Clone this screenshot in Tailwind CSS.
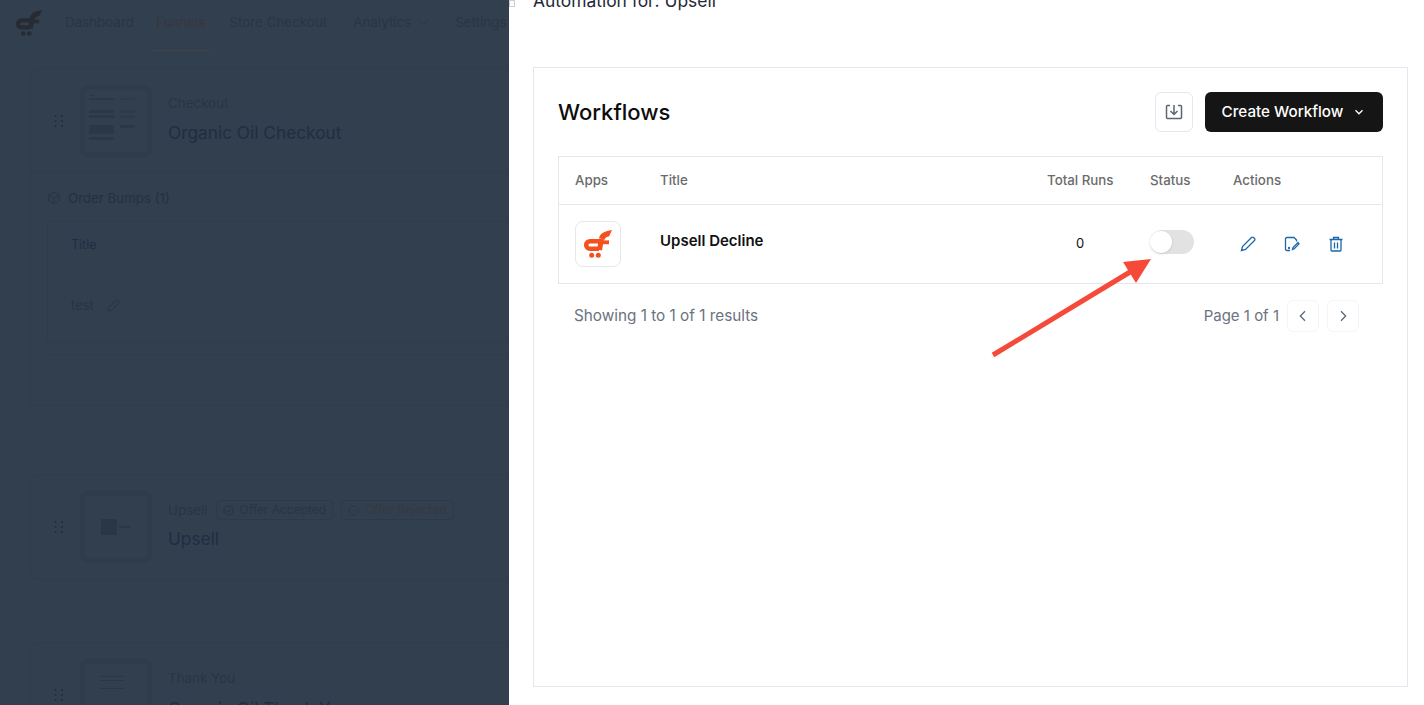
<!DOCTYPE html>
<html><head><meta charset="utf-8"><title>Workflows</title>
<script src="https://cdn.jsdelivr.net/npm/@tailwindcss/browser@4"></script></head>
<body class="m-0">
<div class="relative flex h-[705px] w-[1424px] overflow-hidden bg-white font-['Inter','Liberation_Sans',sans-serif]">
  <!-- dimmed page -->
  <div class="h-full w-[509px] shrink-0 overflow-hidden bg-[#323f4e]">
    <div class="w-[560px]">
      <nav class="flex h-[51px] items-start pl-[16px] text-[13.400px] leading-5 text-[#2a3545]">
        <svg class="mt-[10px] h-[26px] w-[26px]" viewBox="0 0 28 28" fill="none" stroke="#262b34" stroke-width="4.500"><path d="M15 11.200H6a3.800 3.800 0 0 0 0 7.600h9"/><path d="M15.500 20 17.500 9" stroke-width="5"/><path d="M15 8C16.500 3 21 1 28 0L25 6.500C22.500 6.800 21 7.800 20.500 10z" fill="#262b34" stroke="none"/><path d="M14 12.300h11" stroke-width="3.800"/><circle cx="7.700" cy="25.300" r="2.500" fill="#262b34" stroke="none"/><circle cx="14.300" cy="25.300" r="2.500" fill="#262b34" stroke="none"/></svg>
        <a class="ml-[23px] mt-[12px]">Dashboard</a>
        <a class="relative ml-[22px] mt-[12px] h-[39px] text-[#38363f]">Funnels<span class="absolute -left-[4px] -right-[4px] bottom-0 h-px bg-[#44434a]"></span></a>
        <a class="ml-[24px] mt-[12px]">Store Checkout</a>
        <a class="ml-[26px] mt-[12px] flex items-center gap-[6px]">Analytics
          <svg class="h-3 w-3" viewBox="0 0 12 12" fill="none" stroke="currentColor"><path d="m1.500 4 4.500 4.500L10.500 4"/></svg></a>
        <a class="ml-[26px] mt-[12px]">Settings</a>
      </nav>
      <div class="ml-[30px] mt-[17px] h-[338px] w-[490px] rounded-t-lg border border-[#303c4b]">
        <div class="flex h-[104px] items-center border-b border-[#303c4b]">
          <svg class="ml-[23px] h-[14px] w-[10px]" viewBox="0 0 10 14" fill="#252d3b"><circle cx="1.500" cy="2" r="1"/><circle cx="8" cy="2" r="1"/><circle cx="1.500" cy="7" r="1"/><circle cx="8" cy="7" r="1"/><circle cx="1.500" cy="12" r="1"/><circle cx="8" cy="12" r="1"/></svg>
          <div class="ml-[16px] grid h-[72px] w-[72px] shrink-0 grid-cols-[25px_15px] content-start gap-x-[6px] gap-y-[2px] rounded-lg border-[5px] border-[#2f3c4b] px-[4px] pt-[5px]">
            <span class="col-span-2 h-[1px] w-[5px] bg-[#2d3846]"></span>
            <span class="h-[2px] bg-[#2d3846]"></span><span class="h-[2px] bg-[#303b4a]"></span>
            <span class="mt-[8px] h-[3px] bg-[#2d3846]"></span><span class="mt-[8px] h-[3px] bg-[#303b4a]"></span>
            <span class="h-[3px] bg-[#2d3846]"></span><span class="h-[3px] bg-[#303b4a]"></span>
            <span class="mt-[5px] h-[9px] bg-[#2d3846]"></span><span class="mt-[5px] h-[3px] bg-[#2d3846]"></span>
            <span class="mt-[1px] h-[3px] bg-[#2d3846]"></span>
          </div>
          <div class="ml-[16px] -mt-[2px]">
            <p class="text-[13.400px] leading-4 text-[#2a3545]">Checkout</p>
            <p class="mt-[10px] text-[17.300px] leading-6 text-[#232c45]">Organic Oil Checkout</p>
          </div>
        </div>
        <div class="flex items-center gap-[7px] pl-[16px] pt-[17px] text-[13.300px] leading-4 text-[#263041]">
          <svg class="h-[14px] w-[14px]" viewBox="0 0 24 24" fill="none" stroke="#283241" stroke-width="1.500"><path d="M12 2 21 7v10l-9 5-9-5V7z"/><path d="m3 7 9 5 9-5M12 12v10"/></svg>
          Order Bumps (1)
        </div>
        <div class="ml-[16px] mt-[15px] h-[122px] w-[470px] border border-[#303c4b] pl-[23px] pt-[15px] text-[12.500px] leading-4 text-[#232c45]">
          <p>Title</p>
          <p class="mt-[44px] flex items-center gap-[12px] text-[13px] text-[#293444]">test
            <svg class="h-[15px] w-[15px]" viewBox="0 0 24 24" fill="none" stroke="#283241" stroke-width="1.500"><path d="M3 21l1.500-6L17 2.500l4.500 4.500L9 19.500z"/></svg></p>
        </div>
        <div class="ml-[16px] mt-[11px] h-[50px] w-[470px] border-t border-[#303c4b]"></div>
      </div>
      <div class="ml-[30px] mt-[68px] flex h-[106px] w-[490px] items-center rounded-lg border border-[#303c4b]">
        <svg class="ml-[23px] h-[14px] w-[10px]" viewBox="0 0 10 14" fill="#252d3b"><circle cx="1.500" cy="2" r="1"/><circle cx="8" cy="2" r="1"/><circle cx="1.500" cy="7" r="1"/><circle cx="8" cy="7" r="1"/><circle cx="1.500" cy="12" r="1"/><circle cx="8" cy="12" r="1"/></svg>
        <div class="ml-[16px] flex h-[72px] w-[72px] shrink-0 items-center justify-center gap-[2px] rounded-lg border-[5px] border-[#2f3c4b]">
          <span class="h-4 w-4 bg-[#2c3746]"></span><span class="h-[2px] w-3 bg-[#2d3846]"></span>
        </div>
        <div class="ml-[16px] -mt-[3px]">
          <div class="flex items-center gap-[8px] text-[13.400px] leading-4 text-[#2a3545]">Upsell
            <span class="flex h-5 items-center gap-[6px] rounded border border-[#2e3a49] px-[6px] text-[12px]">
              <svg class="h-[11px] w-[11px]" viewBox="0 0 12 12" fill="none" stroke="#283241"><circle cx="6" cy="6" r="5"/><path d="m3.500 6 2 2 3-4"/></svg>Offer Accepted</span>
            <span class="flex h-5 items-center gap-[6px] rounded border border-[#2e3a49] px-[6px] text-[12px] text-[#363741]">
              <svg class="h-[11px] w-[11px]" viewBox="0 0 12 12" fill="none" stroke="#333540"><circle cx="6" cy="6" r="5"/><path d="M4 6h4"/></svg>Offer Rejected</span>
          </div>
          <p class="mt-[7px] text-[17.300px] leading-6 text-[#232c45]">Upsell</p>
        </div>
      </div>
      <div class="ml-[30px] mt-[62px] flex h-[106px] w-[490px] items-center rounded-lg border border-[#303c4b]">
        <svg class="ml-[23px] h-[14px] w-[10px]" viewBox="0 0 10 14" fill="#252d3b"><circle cx="1.500" cy="2" r="1"/><circle cx="8" cy="2" r="1"/><circle cx="1.500" cy="7" r="1"/><circle cx="8" cy="7" r="1"/><circle cx="1.500" cy="12" r="1"/><circle cx="8" cy="12" r="1"/></svg>
        <div class="ml-[16px] flex h-[72px] w-[72px] shrink-0 flex-col gap-[3px] rounded-lg border-[5px] border-[#2f3c4b] px-[14px] pt-[12px]">
          <span class="h-px w-[26px] bg-[#2d3846]"></span><span class="h-px w-[26px] bg-[#2d3846]"></span><span class="mt-1 h-px w-[26px] bg-[#2d3846]"></span>
        </div>
        <div class="ml-[16px]">
          <p class="text-[13.400px] leading-4 text-[#2a3545]">Thank You</p>
          <p class="mt-[11px] text-[17.300px] leading-6 text-[#232c45]">Organic Oil Thank You</p>
        </div>
      </div>
    </div>
  </div>
  <!-- drawer -->
  <div class="relative h-full flex-1 bg-white">
    <span class="absolute left-0 top-0 h-[7px] w-[6px] border border-[#c9ced4] bg-white"></span>
    <p class="-mt-[11px] pl-[24px] text-[17.400px] leading-6 text-[#1f2937]">Automation for: Upsell</p>
    <div class="ml-[24px] mt-[54px] h-[620px] w-[875px] border border-[#e3e8ee] px-[24px] pt-[24px]">
      <div class="flex h-[40px] items-center">
        <h2 class="text-[22px] font-medium text-[#0d0d0d]">Workflows</h2>
        <button class="ml-auto flex h-[40px] w-[38px] items-center justify-center rounded-md border border-[#e5e7eb]">
          <svg class="h-5 w-5" viewBox="0 0 20 20" fill="none" stroke="#5b6675" stroke-width="1.500"><path d="M6 3.500H3.500a1 1 0 0 0-1 1v11a1 1 0 0 0 1 1h13a1 1 0 0 0 1-1v-11a1 1 0 0 0-1-1H14"/><path d="M10 3v9M6.500 9l3.500 3.500L13.500 9"/></svg>
        </button>
        <button class="ml-[12px] flex h-[40px] w-[178px] items-center justify-center gap-[9px] rounded-md bg-[#151515] text-[15.200px] font-medium text-white">Create Workflow
          <svg class="h-[14px] w-[14px]" viewBox="0 0 12 12" fill="none" stroke="#fff" stroke-width="1.100"><path d="m3 4.500 3 3 3-3"/></svg></button>
      </div>
      <div class="mt-[24px] border border-[#e5e7eb]">
        <div class="flex h-[48px] items-center border-b border-[#e5e7eb] text-[13.300px] font-medium text-[#6b6b6b]">
          <span class="ml-[16px] w-[85px]">Apps</span>
          <span class="w-[387px]">Title</span>
          <span class="w-[103px]">Total Runs</span>
          <span class="w-[83px]">Status</span>
          <span>Actions</span>
        </div>
        <div class="flex h-[78px] items-center">
          <span class="ml-[16px] flex h-[46px] w-[46px] items-center justify-center rounded-lg border border-[#e5e7eb]">
            <svg class="h-7 w-7" viewBox="0 0 28 28" fill="none" stroke="#f4511e" stroke-width="4.500"><path d="M15 11.200H6a3.800 3.800 0 0 0 0 7.600h9"/><path d="M15.500 20 17.500 9" stroke-width="5"/><path d="M15 8C16.500 3 21 1 28 0L25 6.500C22.500 6.800 21 7.800 20.500 10z" fill="#f4511e" stroke="none"/><path d="M14 12.300h11" stroke-width="3.800"/><circle cx="7.700" cy="25.300" r="2.500" fill="#f4511e" stroke="none"/><circle cx="14.300" cy="25.300" r="2.500" fill="#f4511e" stroke="none"/></svg>
          </span>
          <span class="-mt-[5px] ml-[39px] w-[387px] text-[15px] font-semibold text-[#111]">Upsell Decline</span>
          <span class="w-[103px] pl-[29px] text-[13px] text-[#111]">0</span>
          <span class="relative -mt-[4px] h-[24px] w-[44px] rounded-full bg-[#e2e2e2]"><span class="absolute left-0 top-px h-[22px] w-[22px] rounded-full bg-white shadow"></span></span>
          <span class="ml-[46px] flex gap-[28px]">
            <svg class="h-4 w-4" viewBox="0 0 16 16" fill="none" stroke="#1a66a8" stroke-width="1.300"><path d="M1.500 14.500l1-4L11.500 1.500a1.400 1.400 0 0 1 2 0l1 1a1.400 1.400 0 0 1 0 2L5.500 13.500z"/></svg>
            <svg class="h-4 w-4" viewBox="0 0 16 16" fill="none" stroke="#1a66a8" stroke-width="1.300"><path d="M6 14.500H3a1.500 1.500 0 0 1-1.500-1.500V3A1.500 1.500 0 0 1 3 1.500h7l2.500 2.500v1.500"/><path d="M8.500 13.500l.5-2 5-5 1 1.500-5 5z"/><circle cx="5" cy="12" r=".5"/></svg>
            <svg class="h-4 w-4" viewBox="0 0 16 16" fill="none" stroke="#1a66a8" stroke-width="1.300"><path d="M1.500 3.500h13M5.500 3.500v-2h5v2M3 3.500v10.500a1 1 0 0 0 1 1h8a1 1 0 0 0 1-1V3.500M6.500 6.500v6M9.500 6.500v6"/></svg>
          </span>
        </div>
      </div>
      <div class="mt-[16px] flex h-[32px] items-center">
        <span class="pl-[16px] text-[15.300px] text-[#6b7280]">Showing 1 to 1 of 1 results</span>
        <span class="ml-auto text-[15px] text-[#6b7280]">Page 1 of 1</span>
        <button class="ml-[8px] flex h-[32px] w-[32px] items-center justify-center rounded-md border border-[#f3f4f6]"><svg class="h-4 w-4" viewBox="0 0 12 12" fill="none" stroke="#5b6b80" stroke-width="1"><path d="M7.500 2.500 4 6l3.500 3.500"/></svg></button>
        <button class="ml-[8px] mr-[24px] flex h-[32px] w-[32px] items-center justify-center rounded-md border border-[#f3f4f6]"><svg class="h-4 w-4" viewBox="0 0 12 12" fill="none" stroke="#5b6b80" stroke-width="1"><path d="M4.500 2.500 8 6 4.500 9.500"/></svg></button>
      </div>
    </div>
  </div>
  <!-- annotation arrow -->
  <svg class="pointer-events-none absolute left-0 top-0" width="1424" height="705" fill="none">
    <path d="M993 355 1130 272" stroke="#f54a39" stroke-width="5"/>
    <path d="M1123 262 1151 259 1136 283z" fill="#f54a39"/>
  </svg>
</div>
</body></html>
